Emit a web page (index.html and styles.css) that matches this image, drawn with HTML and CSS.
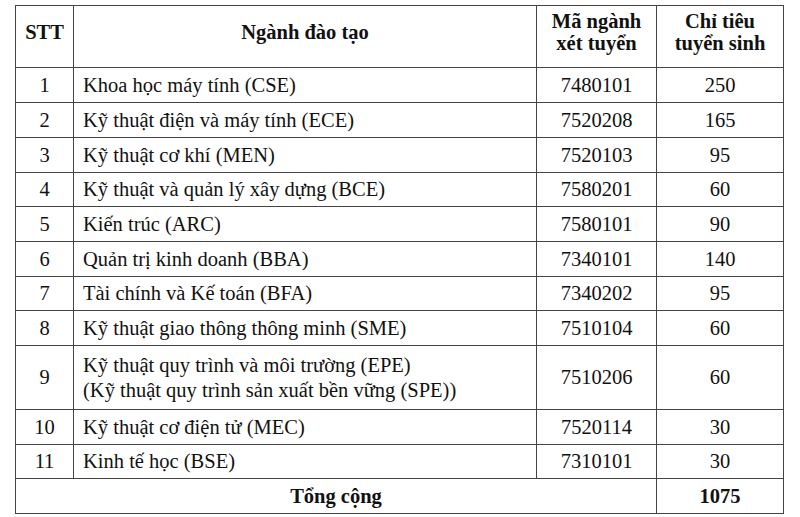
FILE: index.html
```html
<!DOCTYPE html>
<html lang="vi">
<head>
<meta charset="utf-8">
<title>Chỉ tiêu tuyển sinh</title>
<link rel="stylesheet" href="styles.css">
</head>
<body>
<div class="table">
  <div class="cell head">STT</div>
  <div class="cell head">Ngành đào tạo</div>
  <div class="cell head">Mã ngành<br>xét tuyển</div>
  <div class="cell head">Chỉ tiêu<br>tuyển sinh</div>

  <div class="cell c">1</div><div class="cell l">Khoa học máy tính (CSE)</div><div class="cell c">7480101</div><div class="cell c">250</div>
  <div class="cell c">2</div><div class="cell l">Kỹ thuật điện và máy tính (ECE)</div><div class="cell c">7520208</div><div class="cell c">165</div>
  <div class="cell c">3</div><div class="cell l">Kỹ thuật cơ khí (MEN)</div><div class="cell c">7520103</div><div class="cell c">95</div>
  <div class="cell c">4</div><div class="cell l">Kỹ thuật và quản lý xây dựng (BCE)</div><div class="cell c">7580201</div><div class="cell c">60</div>
  <div class="cell c">5</div><div class="cell l">Kiến trúc (ARC)</div><div class="cell c">7580101</div><div class="cell c">90</div>
  <div class="cell c">6</div><div class="cell l">Quản trị kinh doanh (BBA)</div><div class="cell c">7340101</div><div class="cell c">140</div>
  <div class="cell c">7</div><div class="cell l">Tài chính và Kế toán (BFA)</div><div class="cell c">7340202</div><div class="cell c">95</div>
  <div class="cell c">8</div><div class="cell l">Kỹ thuật giao thông thông minh (SME)</div><div class="cell c">7510104</div><div class="cell c">60</div>
  <div class="cell c">9</div><div class="cell l">Kỹ thuật quy trình và môi trường (EPE)<br>(Kỹ thuật quy trình sản xuất bền vững (SPE))</div><div class="cell c">7510206</div><div class="cell c">60</div>
  <div class="cell c">10</div><div class="cell l">Kỹ thuật cơ điện tử (MEC)</div><div class="cell c">7520114</div><div class="cell c">30</div>
  <div class="cell c">11</div><div class="cell l">Kinh tế học (BSE)</div><div class="cell c">7310101</div><div class="cell c">30</div>

  <div class="cell c total-label">Tổng cộng</div>
  <div class="cell c total">1075</div>
</div>
</body>
</html>
```

FILE: styles.css
```css
html, body {
  margin: 0;
  padding: 0;
  background: #ffffff;
}

body {
  font-family: "Liberation Serif", "Times New Roman", serif;
  font-size: 20.5px;
  color: #111111;
}

.table {
  display: grid;
  grid-template-columns: 57px 462px 119px 126px;
  grid-template-rows: 61px 34px 34px 34px 33px 34px 34px 33px 34px 63px 34px 33px 34px;
  gap: 1px;
  padding: 1px;
  background: #444444;
  width: max-content;
  margin: 5px 0 0 15px;
}

.cell {
  background: #ffffff;
  display: flex;
  align-items: center;
  line-height: 25px;
}

.c {
  justify-content: center;
  text-align: center;
}

.l {
  justify-content: flex-start;
  padding-left: 9px;
}

.head {
  font-weight: bold;
  justify-content: center;
  text-align: center;
  line-height: 22px;
  padding-bottom: 10px;
}

.total-label {
  grid-column: 1 / 4;
  font-weight: bold;
}

.total {
  font-weight: bold;
}
```
